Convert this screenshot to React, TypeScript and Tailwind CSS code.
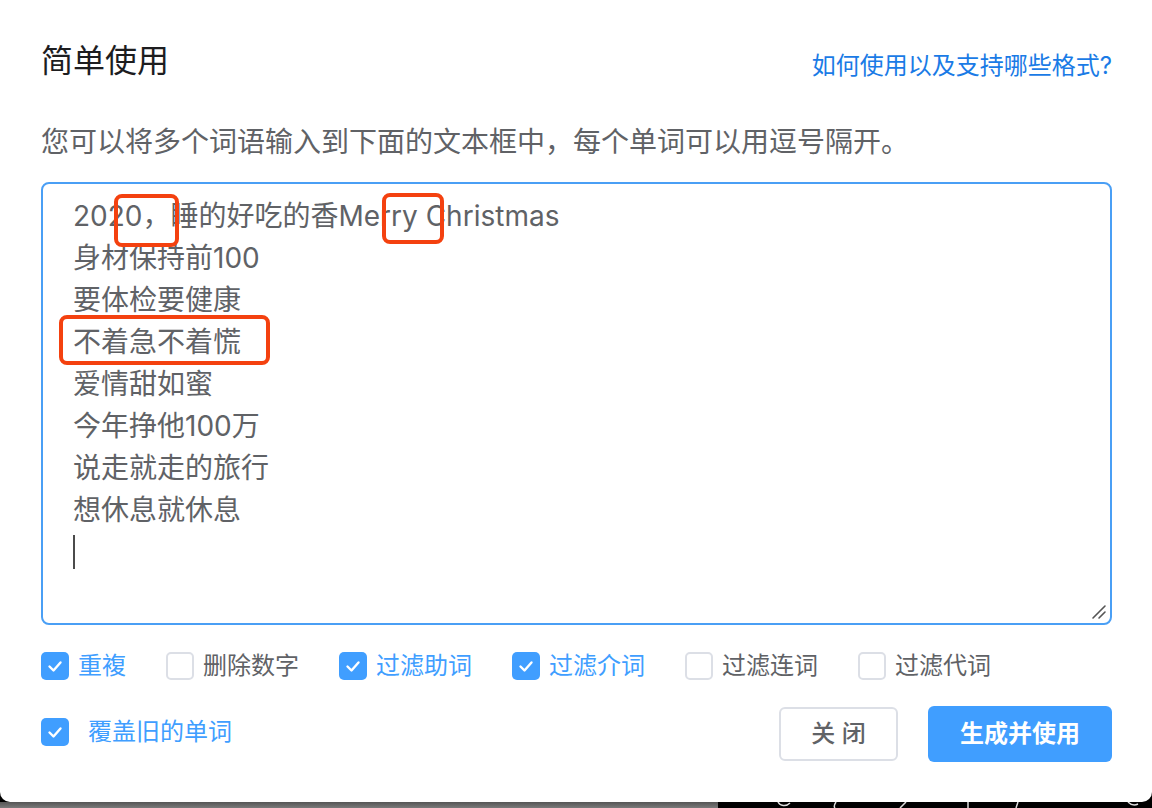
import React from 'react';

const lines = [
    '2020，睡的好吃的香Merry Christmas',
    '身材保持前100',
    '要体检要健康',
    '不着急不着慌',
    '爱情甜如蜜',
    '今年挣他100万',
    '说走就走的旅行',
    '想休息就休息',
];

const options = [
    { label: '重複', checked: true },
    { label: '删除数字', checked: false },
    { label: '过滤助词', checked: true },
    { label: '过滤介词', checked: true },
    { label: '过滤连词', checked: false },
    { label: '过滤代词', checked: false },
];

const Box: React.FC<{ checked: boolean }> = ({ checked }) =>
    checked ? (
        <span className="w-[28px] h-[28px] shrink-0 rounded-[5px] bg-[#409eff] flex items-center justify-center">
            <svg width="28" height="28" viewBox="0 0 28 28" fill="none">
                <path d="M8.5 14.5l4 4 7-8" stroke="#fff" strokeWidth="2.4" strokeLinecap="round" strokeLinejoin="round" />
            </svg>
        </span>
    ) : (
        <span className="w-[28px] h-[28px] shrink-0 rounded-[5px] border-2 border-[#dcdfe6] bg-white" />
    );

const App: React.FC = () => {
    return (
        <div className="w-[1152px] h-[808px] flex flex-col overflow-hidden bg-black font-['Inter','Noto_Sans_CJK_SC',sans-serif]">
            <div className="h-[802px] shrink-0 bg-white rounded-b-[10px] px-[41px] pr-[40px] flex flex-col">
                {/* header */}
                <div className="pt-[41px] flex items-center justify-between">
                    <h1 className="text-[32px] leading-[40px] text-[#1d1d1f] font-normal">简单使用</h1>
                    <a className="mt-[10px] text-[24px] leading-[28px] text-[#1a7be6]">如何使用以及支持哪些格式?</a>
                </div>

                <p className="mt-[41px] text-[28px] leading-[40px] text-[#606266]">
                    您可以将多个词语输入到下面的文本框中，每个单词可以用逗号隔开。
                </p>

                {/* textarea */}
                <div className="relative mt-[20px] h-[443px] border-2 border-[#4a9ff5] rounded-[8px] pl-[30px] pt-[11px] text-[28px] leading-[42px] text-[#606266]">
                    {lines.map((l) => (
                        <div key={l} className="h-[42px] whitespace-pre">{l}</div>
                    ))}
                    <div className="h-[42px] flex items-center">
                        <span className="w-[2px] h-[34px] bg-[#4b4b4b]" />
                    </div>

                    <span className="absolute left-[71px] top-[10px] w-[65px] h-[53px] border-[4px] border-[#f4410f] rounded-[8px]" />
                    <span className="absolute left-[339px] top-[9px] w-[62px] h-[51px] border-[4px] border-[#f4410f] rounded-[8px]" />
                    <span className="absolute left-[16px] top-[131px] w-[211px] h-[50px] border-[4px] border-[#f4410f] rounded-[8px]" />

                    <svg className="absolute right-[3px] bottom-[3px]" width="16" height="16" viewBox="0 0 16 16" fill="none">
                        <path d="M2 14L14 2M8 14l6-6" stroke="#555" strokeWidth="1.6" strokeLinecap="round" />
                    </svg>
                </div>

                {/* options */}
                <div className="mt-[27px] flex items-center gap-[40px]">
                    {options.map((o) => (
                        <label key={o.label} className="flex items-center gap-[9px]">
                            <Box checked={o.checked} />
                            <span className={`text-[24px] leading-[28px] ${o.checked ? 'text-[#409eff]' : 'text-[#606266]'}`}>
                                {o.label}
                            </span>
                        </label>
                    ))}
                </div>

                {/* footer */}
                <div className="mt-[26px] flex items-center justify-between">
                    <label className="flex items-center gap-[19px] -mt-[4px]">
                        <Box checked />
                        <span className="text-[24px] leading-[28px] text-[#409eff]">覆盖旧的单词</span>
                    </label>
                    <div className="flex items-center gap-[30px]">
                        <button className="w-[119px] h-[54px] border-2 border-[#dcdfe6] rounded-[6px] bg-white text-[24px] font-medium text-[#606266]">
                            关 闭
                        </button>
                        <button className="w-[184px] h-[56px] rounded-[6px] bg-[#409eff] text-[24px] font-bold text-white">
                            生成并使用
                        </button>
                    </div>
                </div>
            </div>

            {/* page behind the dialog */}
            <div className="flex-1 flex">
                <div className="w-[718px] bg-gradient-to-b from-[#555] to-[#7a7a7a]" />
                <div className="flex-1 bg-black relative">
                    <svg className="absolute inset-0" width="434" height="6" viewBox="0 0 434 6" fill="none">
                        <path d="M60 0c2 4 8 5 12 1M118 0c-2 3-2 5-1 6M182 6l6-6M250 0v6M300 0l-2 6M410 0c3 3 6 4 10 2" stroke="#ddd" strokeWidth="1.5" />
                    </svg>
                </div>
            </div>
        </div>
    );
};

export default App;
